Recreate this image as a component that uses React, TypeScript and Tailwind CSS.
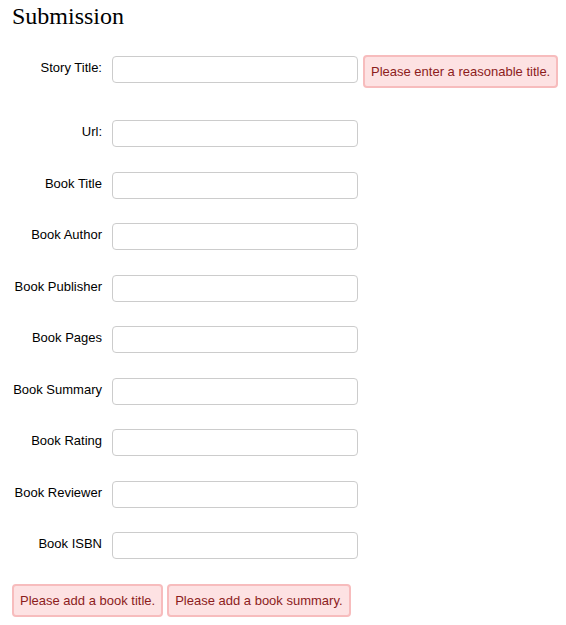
const fields = [
  "Url:",
  "Book Title",
  "Book Author",
  "Book Publisher",
  "Book Pages",
  "Book Summary",
  "Book Rating",
  "Book Reviewer",
  "Book ISBN",
];

const ErrorBox = ({ children }: { children: string }) => (
  <div className="rounded-[4px] border-2 border-[#f7bcbd] bg-[#fde2e3] px-[6px] py-[7px] text-[13px] leading-[15px] text-[#8c1c1c]">
    {children}
  </div>
);

const Field = ({ label }: { label: string }) => (
  <div className="flex items-start">
    <label className="w-[90px] shrink-0 pt-[4px] text-right text-[13px] leading-[15px] text-black">
      {label}
    </label>
    <input
      type="text"
      className="ml-[10px] h-[27px] w-[246px] rounded-[4px] border border-[#cccccc] bg-white"
    />
  </div>
);

export default function App() {
  return (
    <div className="min-h-[625px] bg-white pl-[12px] font-['Liberation_Sans',Arial,sans-serif]">
      <h1 className="pt-[2px] font-['Liberation_Serif','Times_New_Roman',serif] text-[24px] leading-[28px] text-black">
        Submission
      </h1>

      <form className="mt-[25px] flex flex-col">
        {/* STORY TITLE */}
        <div className="mb-[32px] flex items-start">
          <label className="w-[90px] shrink-0 pt-[5px] text-right text-[13px] leading-[15px] text-black">
            Story Title:
          </label>
          <input
            type="text"
            className="ml-[10px] mt-[1px] h-[27px] w-[246px] rounded-[4px] border border-[#cccccc] bg-white"
          />
          <div className="ml-[5px]">
            <ErrorBox>Please enter a reasonable title.</ErrorBox>
          </div>
        </div>

        <div className="flex flex-col gap-[24.5px]">
          {fields.map((f) => (
            <Field key={f} label={f} />
          ))}
        </div>

        {/* ERRORS */}
        <div className="mt-[25px] flex items-start gap-[4px]">
          <ErrorBox>Please add a book title.</ErrorBox>
          <ErrorBox>Please add a book summary.</ErrorBox>
        </div>
      </form>
    </div>
  );
}
